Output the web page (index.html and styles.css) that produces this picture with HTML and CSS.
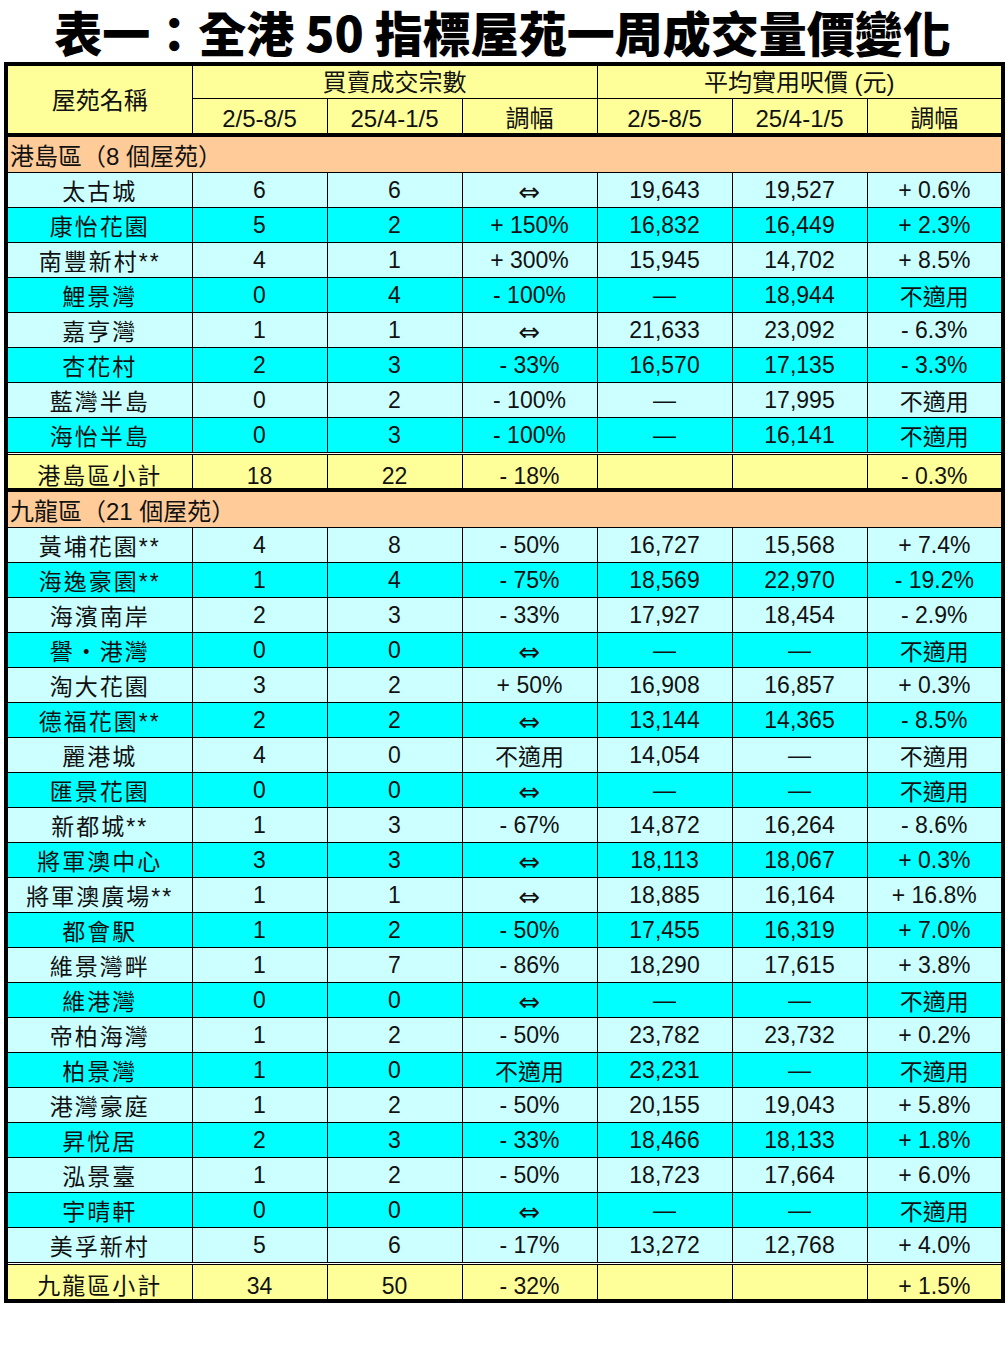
FILE: index.html
```html
<!DOCTYPE html>
<html lang="zh-Hant">
<head>
<meta charset="utf-8">
<link rel="stylesheet" href="styles.css">
</head>
<body>
<div class="page">
  <h1 class="title">表一：全港 50 指標屋苑一周成交量價變化</h1>
  <table class="tbl">
    <colgroup>
      <col class="c-name"><col class="c-n"><col class="c-n"><col class="c-n"><col class="c-n"><col class="c-n"><col class="c-last">
    </colgroup>
    <thead>
      <tr class="h1">
        <th rowspan="2" class="hname">屋苑名稱</th>
        <th colspan="3" class="hgrp">買賣成交宗數</th>
        <th colspan="3" class="hgrp">平均實用呎價 (元)</th>
      </tr>
      <tr class="h2">
        <th>2/5-8/5</th><th>25/4-1/5</th><th>調幅</th>
        <th>2/5-8/5</th><th>25/4-1/5</th><th>調幅</th>
      </tr>
    </thead>
    <tbody>
      <tr class="sec"><td colspan="7">港島區（8 個屋苑）</td></tr>
      <tr class="lt"><td class="nm">太古城</td><td>6</td><td>6</td><td class="ar">⇔</td><td>19,643</td><td>19,527</td><td>+ 0.6%</td></tr>
      <tr class="dk"><td class="nm">康怡花園</td><td>5</td><td>2</td><td>+ 150%</td><td>16,832</td><td>16,449</td><td>+ 2.3%</td></tr>
      <tr class="lt"><td class="nm">南豐新村**</td><td>4</td><td>1</td><td>+ 300%</td><td>15,945</td><td>14,702</td><td>+ 8.5%</td></tr>
      <tr class="dk"><td class="nm">鯉景灣</td><td>0</td><td>4</td><td>- 100%</td><td>—</td><td>18,944</td><td>不適用</td></tr>
      <tr class="lt"><td class="nm">嘉亨灣</td><td>1</td><td>1</td><td class="ar">⇔</td><td>21,633</td><td>23,092</td><td>- 6.3%</td></tr>
      <tr class="dk"><td class="nm">杏花村</td><td>2</td><td>3</td><td>- 33%</td><td>16,570</td><td>17,135</td><td>- 3.3%</td></tr>
      <tr class="lt"><td class="nm">藍灣半島</td><td>0</td><td>2</td><td>- 100%</td><td>—</td><td>17,995</td><td>不適用</td></tr>
      <tr class="dk"><td class="nm">海怡半島</td><td>0</td><td>3</td><td>- 100%</td><td>—</td><td>16,141</td><td>不適用</td></tr>
      <tr class="sub"><td class="nm"><div class="clip">港島區小計</div></td><td><div class="clip">18</div></td><td><div class="clip">22</div></td><td><div class="clip">- 18%</div></td><td></td><td></td><td><div class="clip">- 0.3%</div></td></tr>
      <tr class="sec sec2"><td colspan="7">九龍區（21 個屋苑）</td></tr>
      <tr class="lt"><td class="nm">黃埔花園**</td><td>4</td><td>8</td><td>- 50%</td><td>16,727</td><td>15,568</td><td>+ 7.4%</td></tr>
      <tr class="dk"><td class="nm">海逸豪園**</td><td>1</td><td>4</td><td>- 75%</td><td>18,569</td><td>22,970</td><td>- 19.2%</td></tr>
      <tr class="lt"><td class="nm">海濱南岸</td><td>2</td><td>3</td><td>- 33%</td><td>17,927</td><td>18,454</td><td>- 2.9%</td></tr>
      <tr class="dk"><td class="nm">譽・港灣</td><td>0</td><td>0</td><td class="ar">⇔</td><td>—</td><td>—</td><td>不適用</td></tr>
      <tr class="lt"><td class="nm">淘大花園</td><td>3</td><td>2</td><td>+ 50%</td><td>16,908</td><td>16,857</td><td>+ 0.3%</td></tr>
      <tr class="dk"><td class="nm">德福花園**</td><td>2</td><td>2</td><td class="ar">⇔</td><td>13,144</td><td>14,365</td><td>- 8.5%</td></tr>
      <tr class="lt"><td class="nm">麗港城</td><td>4</td><td>0</td><td>不適用</td><td>14,054</td><td>—</td><td>不適用</td></tr>
      <tr class="dk"><td class="nm">匯景花園</td><td>0</td><td>0</td><td class="ar">⇔</td><td>—</td><td>—</td><td>不適用</td></tr>
      <tr class="lt"><td class="nm">新都城**</td><td>1</td><td>3</td><td>- 67%</td><td>14,872</td><td>16,264</td><td>- 8.6%</td></tr>
      <tr class="dk"><td class="nm">將軍澳中心</td><td>3</td><td>3</td><td class="ar">⇔</td><td>18,113</td><td>18,067</td><td>+ 0.3%</td></tr>
      <tr class="lt"><td class="nm">將軍澳廣場**</td><td>1</td><td>1</td><td class="ar">⇔</td><td>18,885</td><td>16,164</td><td>+ 16.8%</td></tr>
      <tr class="dk"><td class="nm">都會駅</td><td>1</td><td>2</td><td>- 50%</td><td>17,455</td><td>16,319</td><td>+ 7.0%</td></tr>
      <tr class="lt"><td class="nm">維景灣畔</td><td>1</td><td>7</td><td>- 86%</td><td>18,290</td><td>17,615</td><td>+ 3.8%</td></tr>
      <tr class="dk"><td class="nm">維港灣</td><td>0</td><td>0</td><td class="ar">⇔</td><td>—</td><td>—</td><td>不適用</td></tr>
      <tr class="lt"><td class="nm">帝柏海灣</td><td>1</td><td>2</td><td>- 50%</td><td>23,782</td><td>23,732</td><td>+ 0.2%</td></tr>
      <tr class="dk"><td class="nm">柏景灣</td><td>1</td><td>0</td><td>不適用</td><td>23,231</td><td>—</td><td>不適用</td></tr>
      <tr class="lt"><td class="nm">港灣豪庭</td><td>1</td><td>2</td><td>- 50%</td><td>20,155</td><td>19,043</td><td>+ 5.8%</td></tr>
      <tr class="dk"><td class="nm">昇悅居</td><td>2</td><td>3</td><td>- 33%</td><td>18,466</td><td>18,133</td><td>+ 1.8%</td></tr>
      <tr class="lt"><td class="nm">泓景臺</td><td>1</td><td>2</td><td>- 50%</td><td>18,723</td><td>17,664</td><td>+ 6.0%</td></tr>
      <tr class="dk"><td class="nm">宇晴軒</td><td>0</td><td>0</td><td class="ar">⇔</td><td>—</td><td>—</td><td>不適用</td></tr>
      <tr class="lt"><td class="nm">美孚新村</td><td>5</td><td>6</td><td>- 17%</td><td>13,272</td><td>12,768</td><td>+ 4.0%</td></tr>
      <tr class="sub sub2"><td class="nm"><div class="clip">九龍區小計</div></td><td><div class="clip">34</div></td><td><div class="clip">50</div></td><td><div class="clip">- 32%</div></td><td></td><td></td><td><div class="clip">+ 1.5%</div></td></tr>
    </tbody>
  </table>
</div>
</body>
</html>
```

FILE: styles.css
```css
html, body {
  margin: 0;
  padding: 0;
  background: #ffffff;
}

.page {
  padding: 0 0 0 4px;
  width: 997px;
}

.title {
  margin: 0;
  height: 55px;
  padding-top: 7px;
  line-height: 48px;
  text-align: center;
  font-family: "Noto Sans CJK TC", "Noto Sans CJK SC", sans-serif;
  font-weight: 900;
  font-size: 48px;
  color: #000;
  white-space: nowrap;
}

.tbl {
  width: 997px;
  table-layout: fixed;
  border-collapse: collapse;
  border: 4px solid #000;
  font-family: "Liberation Sans", "Noto Sans CJK TC", sans-serif;
  font-size: 23px;
  color: #111;
}

.c-name { width: 186px; }
.c-n { width: 135px; }
.c-last { width: 136px; }

.tbl th,
.tbl td {
  border: 1px solid #000;
  padding: 0;
  text-align: center;
  vertical-align: middle;
  white-space: nowrap;
  overflow: hidden;
}

.tbl thead th {
  background: #ffff99;
  font-weight: normal;
  font-size: 24px;
}

.tbl thead .h1 { height: 34px; }
.tbl thead th.hgrp { vertical-align: bottom; line-height: 30px; }
.tbl thead th.hname { vertical-align: middle; line-height: 30px; padding-top: 2px; }
.tbl thead .h2 { height: 37px; }
.tbl thead .h2 th {
  border-bottom: 4px solid #000;
  vertical-align: bottom;
  line-height: 28px;
}
.tbl thead th.hname { border-bottom: 4px solid #000; }

.sec td {
  background: #ffcc99;
  text-align: left;
  padding-left: 2px;
  font-size: 24px;
  height: 34px;
}

.sec2 td { height: 33px; }

.lt td { background: #ccffff; height: 34px; }
.dk td { background: #00ffff; height: 34px; }

.nm { letter-spacing: 2px; }

.tbl td.ar {
  font-family: "DejaVu Sans", sans-serif;
  font-size: 26px;
  line-height: 1;
  height: 30px;
  padding-top: 4px;
}

.sub td {
  background: #ffff99;
  height: 33px;
  vertical-align: top;
}

.sub:not(.sub2) td {
  border-top: 3px double #000;
  border-bottom: 4px solid #000;
}

.sub2 td {
  border-top: 3px double #000;
  height: 34px;
}

.clip {
  height: 32px;
  overflow: hidden;
  line-height: 42px;
}
```
